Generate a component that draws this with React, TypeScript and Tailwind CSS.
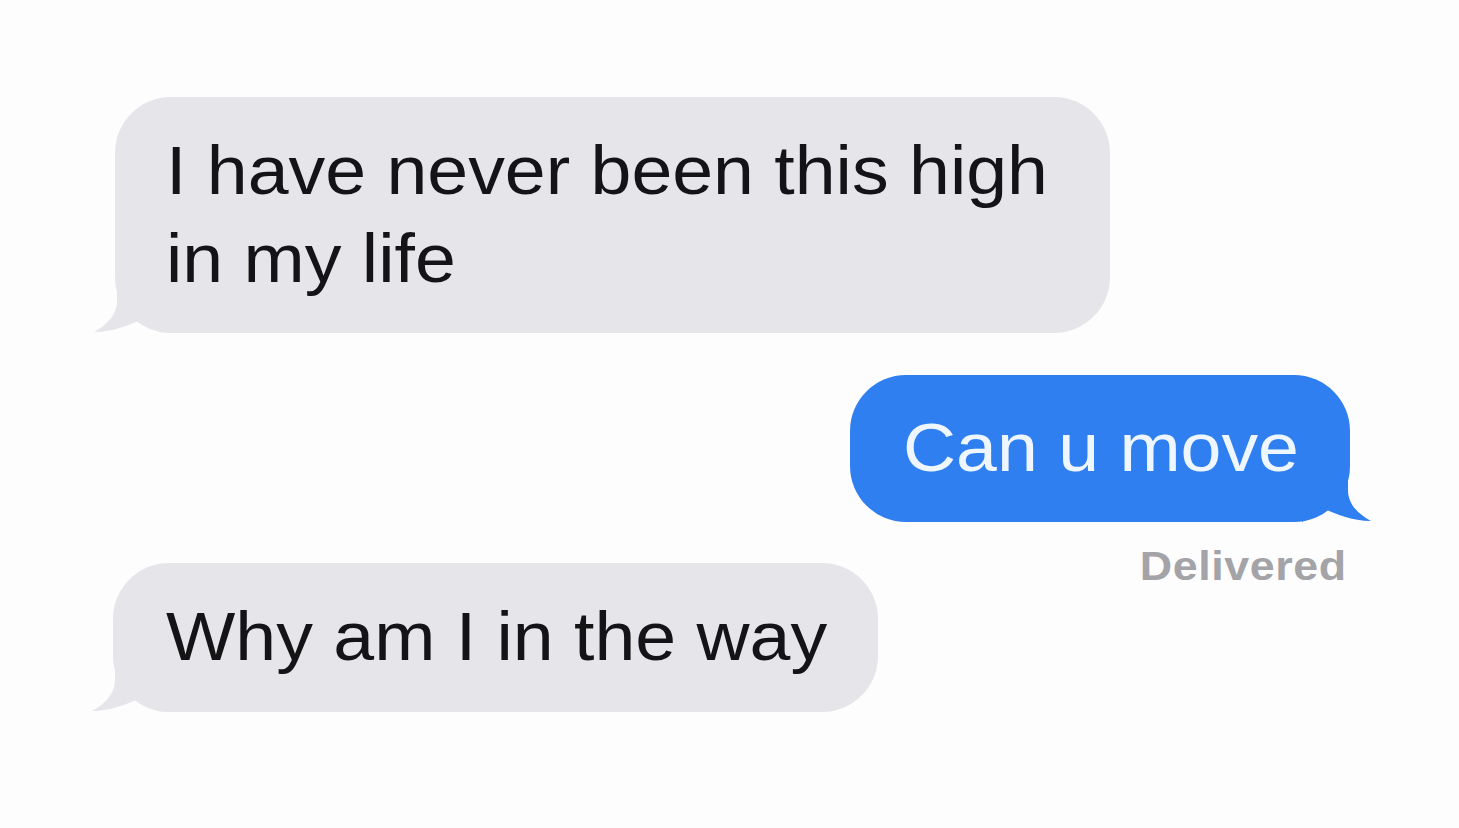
import React from "react";

function GrayTail() {
  return (
    <svg className="absolute left-[-22px] bottom-0" width="70" height="64" viewBox="0 0 70 64">
      <path d="M24 0 L24 32 C24 46 14 56 1 63 C20 63 36 56 50 50 L70 64 L70 0 Z" fill="#e5e5ea" />
    </svg>
  );
}

function BlueTail() {
  return (
    <svg className="absolute right-[-22px] bottom-0" width="70" height="64" viewBox="0 0 70 64">
      <path d="M46 0 L46 32 C46 46 56 56 69 63 C50 63 34 56 20 50 L0 64 L0 0 Z" fill="#2f7ff0" />
    </svg>
  );
}

export default function App() {
  return (
    <div className="min-h-screen w-full bg-[#fdfdfe] flex flex-col font-['Liberation_Sans',Arial,sans-serif]">
      <div className="pl-[115px] pt-[97px]">
        <div className="relative w-[995px] h-[236px] rounded-[56px] bg-[#e5e5ea] pl-[51px] pt-[29px] text-[#141416] text-[68px] leading-[88px]">
          <GrayTail />
          <p className="relative inline-block origin-left scale-x-[1.08]">I have never been this high<br />in my life</p>
        </div>
      </div>

      <div className="flex flex-col items-end pr-[109px] mt-[42px]">
        <div className="relative w-[500px] h-[147px] rounded-[56px] bg-[#2f7ff0] pl-[53px] pb-[3px] flex items-center text-[#eef6ff] text-[68px]">
          <BlueTail />
          <p className="relative inline-block origin-left scale-x-[1.08]">Can u move</p>
        </div>
        <p className="mt-[22px] mr-[3px] text-[40px] leading-[44px] font-bold text-[#a3a3a8] tracking-[0.5px] inline-block origin-right scale-x-[1.12]">Delivered</p>
      </div>

      <div className="pl-[113px] mt-[-25px]">
        <div className="relative w-[765px] h-[149px] rounded-[56px] bg-[#e5e5ea] pl-[53px] pb-[4px] flex items-center text-[#141416] text-[68px]">
          <GrayTail />
          <p className="relative inline-block origin-left scale-x-[1.08]">Why am I in the way</p>
        </div>
      </div>
    </div>
  );
}
